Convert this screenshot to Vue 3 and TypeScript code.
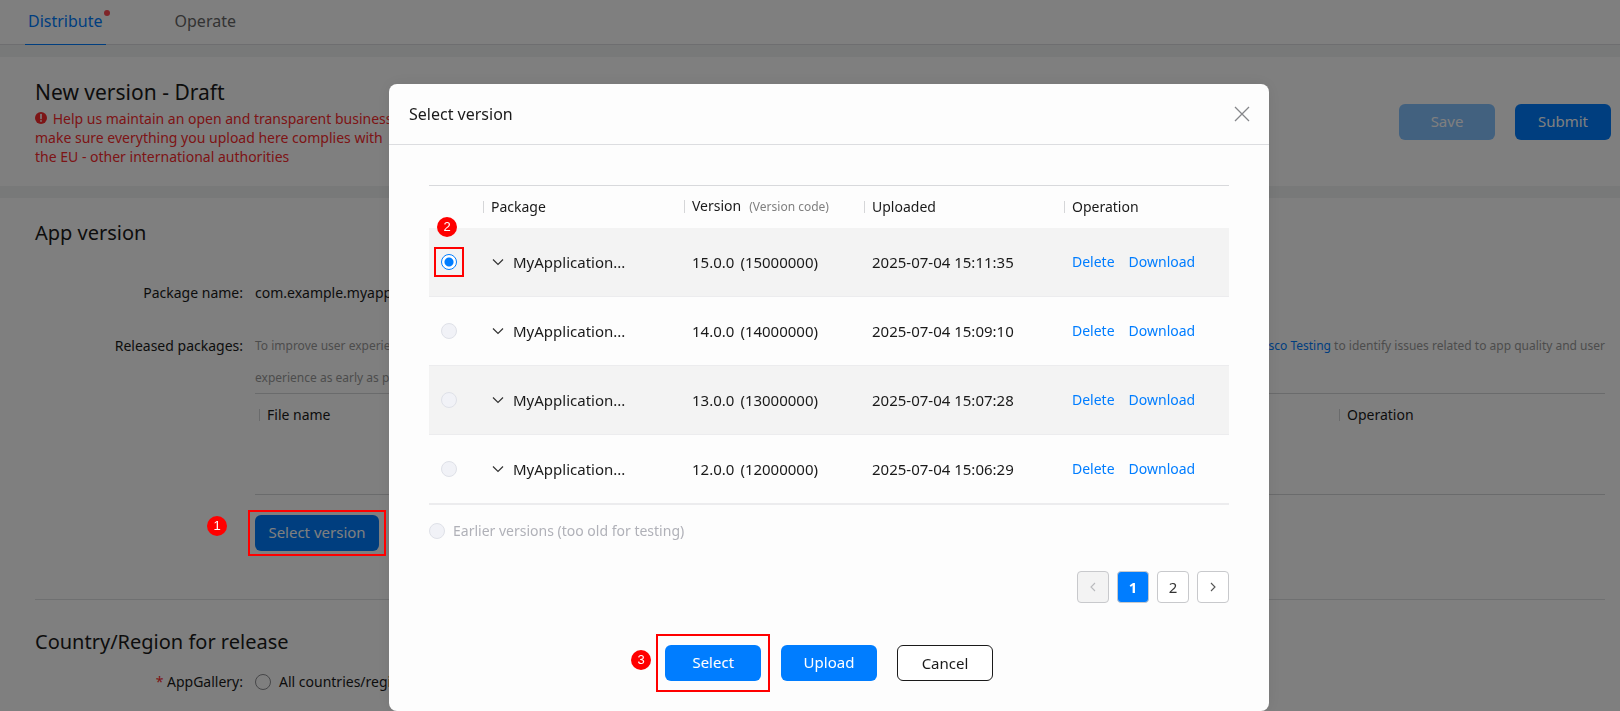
<script setup lang="ts">
import { ref } from 'vue'

interface PackageRow {
  version: string
  code: string
  uploaded: string
}

const rows: PackageRow[] = [
  { version: '15.0.0', code: '(15000000)', uploaded: '2025-07-04 15:11:35' },
  { version: '14.0.0', code: '(14000000)', uploaded: '2025-07-04 15:09:10' },
  { version: '13.0.0', code: '(13000000)', uploaded: '2025-07-04 15:07:28' },
  { version: '12.0.0', code: '(12000000)', uploaded: '2025-07-04 15:06:29' },
]

const selected = ref('15.0.0')
const page = ref(1)
</script>

<template>
  <div class="page">
    <nav class="tabs">
      <a href="#" class="tab active">Distribute<i class="dot"></i></a>
      <a href="#" class="tab">Operate</a>
    </nav>

    <header class="panel intro">
      <div class="intro-text">
        <h1>New version - Draft</h1>
        <p class="notice">
          <svg class="warn" viewBox="0 0 12 12" width="12" height="12" aria-hidden="true">
            <circle cx="6" cy="6" r="6" fill="#fa2a2d" />
            <path d="M6 2.6v4" stroke="#fff" stroke-width="1.6" stroke-linecap="round" />
            <circle cx="6" cy="8.9" r="0.9" fill="#fff" />
          </svg>
          Help us maintain an open and transparent business,<br />
          make sure everything you upload here complies with<br />
          the EU - other international authorities
        </p>
      </div>
      <div class="intro-actions">
        <button type="button" class="btn primary" disabled>Save</button>
        <button type="button" class="btn primary">Submit</button>
      </div>
    </header>

    <main class="panel content">
      <section class="block">
        <h2>App version</h2>
        <div class="field">
          <span class="label">Package name:</span>
          <span class="value">com.example.myapplication</span>
        </div>
        <div class="field">
          <span class="label">Released packages:</span>
          <div class="value">
            <div class="hint">
              <span>To improve user experience,</span>
              <span><a href="#">Disco Testing</a> to identify issues related to app quality and user</span>
            </div>
            <div class="hint">experience as early as possible.</div>
            <table class="files">
              <thead>
                <tr>
                  <th><span>File name</span></th>
                  <th class="op"><span>Operation</span></th>
                </tr>
              </thead>
              <tbody>
                <tr><td colspan="2"></td></tr>
              </tbody>
            </table>
            <div class="anchor">
              <button type="button" class="btn primary wide">Select version</button>
              <span class="frame frame-one"></span>
              <span class="step step-one">1</span>
            </div>
          </div>
        </div>
      </section>

      <section class="block">
        <h2>Country/Region for release</h2>
        <div class="field region">
          <span class="label"><b>*</b> AppGallery:</span>
          <label class="choice"><input type="radio" class="radio" name="region" />All countries/regions</label>
        </div>
      </section>
    </main>

    <div class="scrim">
      <div class="modal" role="dialog" aria-labelledby="dialog-title">
        <div class="modal-head">
          <h3 id="dialog-title">Select version</h3>
          <button type="button" class="icon-btn" aria-label="Close">
            <svg viewBox="0 0 16 16" width="16" height="16" fill="none" stroke="#85868a" stroke-width="1.3">
              <path d="M1 1l14 14M15 1L1 15" />
            </svg>
          </button>
        </div>

        <div class="modal-body">
          <table class="packages">
            <colgroup>
              <col class="c-pick" />
              <col class="c-package" />
              <col class="c-version" />
              <col class="c-uploaded" />
              <col />
            </colgroup>
            <thead>
              <tr>
                <th></th>
                <th><span>Package</span></th>
                <th><span>Version <small>(Version code)</small></span></th>
                <th><span>Uploaded</span></th>
                <th><span>Operation</span></th>
              </tr>
            </thead>
            <tbody>
              <tr v-for="(row, index) in rows" :key="row.version">
                <td class="pick">
                  <div class="anchor">
                    <input
                      v-model="selected"
                      type="radio"
                      class="radio"
                      name="package"
                      :value="row.version"
                      :disabled="index > 0"
                      :aria-label="row.version"
                    />
                    <template v-if="index === 0">
                      <span class="frame frame-two"></span>
                      <span class="step step-two">2</span>
                    </template>
                  </div>
                </td>
                <td>
                  <div class="package">
                    <button type="button" class="icon-btn" aria-label="Expand">
                      <svg viewBox="0 0 12 8" width="12" height="8" fill="none" stroke="#333" stroke-width="1.2">
                        <path d="M1 1.5l5 5 5-5" />
                      </svg>
                    </button>
                    <span>MyApplication...</span>
                  </div>
                </td>
                <td><div class="version"><span>{{ row.version }}</span><span>{{ row.code }}</span></div></td>
                <td>{{ row.uploaded }}</td>
                <td><div class="links"><a href="#">Delete</a><a href="#">Download</a></div></td>
              </tr>
            </tbody>
          </table>

          <label class="choice earlier">
            <input type="radio" class="radio" name="earlier" disabled />Earlier versions (too old for testing)
          </label>

          <div class="pager">
            <button type="button" disabled aria-label="Previous page">
              <svg viewBox="0 0 8 12" width="8" height="12" fill="none" stroke="#b9babd" stroke-width="1.1">
                <path d="M6 2L2 6l4 4" />
              </svg>
            </button>
            <button
              v-for="n in 2"
              :key="n"
              type="button"
              :class="{ current: page === n }"
              @click="page = n"
            >{{ n }}</button>
            <button type="button" aria-label="Next page">
              <svg viewBox="0 0 8 12" width="8" height="12" fill="none" stroke="#555" stroke-width="1.1">
                <path d="M2 2l4 4-4 4" />
              </svg>
            </button>
          </div>
        </div>

        <div class="modal-foot">
          <div class="anchor">
            <button type="button" class="btn primary">Select</button>
            <span class="frame frame-three"></span>
            <span class="step step-three">3</span>
          </div>
          <button type="button" class="btn primary">Upload</button>
          <button type="button" class="btn outline">Cancel</button>
        </div>
      </div>
    </div>
  </div>
</template>

<style>
body {
  margin: 0;
}
</style>

<style scoped>
.page {
  box-sizing: border-box;
  min-height: 100vh;
  display: flex;
  flex-direction: column;
  gap: 12px;
  background: #f1f2f3;
  color: #1a1a1a;
  font: 14px/20px "Noto Sans", "Open Sans", sans-serif;
}
.page * {
  box-sizing: border-box;
}
h1,
h2,
h3,
p {
  margin: 0;
  font-weight: 400;
}
h1,
h2 {
  font-size: 20px;
  line-height: 28px;
}
h1 {
  font-size: 21px;
}
a {
  color: #007dff;
  text-decoration: none;
}
button {
  font: inherit;
  padding: 0;
  cursor: pointer;
}
table {
  width: 100%;
  border-collapse: collapse;
  table-layout: fixed;
}
th {
  font-weight: 400;
  text-align: left;
  padding: 0;
}
td {
  padding: 0;
}

.tabs {
  display: flex;
  height: 45px;
  padding-left: 25px;
  gap: 66px;
  background: #fff;
  border-bottom: 1px solid #dcdde0;
  font-size: 16px;
}
.tab {
  position: relative;
  height: 45px;
  padding: 0 3px;
  line-height: 42px;
  color: #666;
}
.tab.active {
  color: #007dff;
  border-bottom: 1px solid #007dff;
}
.dot {
  position: absolute;
  top: 10px;
  right: -4px;
  width: 6px;
  height: 6px;
  border-radius: 50%;
  background: #ff4a50;
}

.panel {
  background: #fff;
}
.intro {
  display: flex;
  justify-content: space-between;
  padding: 21px 9px 20px 35px;
}
.notice {
  margin-top: 3px;
  line-height: 19px;
  color: #fa2a2d;
}
.warn {
  margin-right: 2px;
  vertical-align: 0;
}
.intro-actions {
  display: flex;
  gap: 20px;
  padding-top: 26px;
}
.btn {
  min-width: 96px;
  height: 36px;
  border: 0;
  border-radius: 6px;
  font-size: 15px;
  line-height: 34px;
}
.btn.primary {
  background: #007dff;
  color: #fff;
}
.btn.primary:disabled {
  background: #84c2ff;
}
.btn.wide {
  min-width: 124px;
}
.btn.outline {
  background: #fff;
  border: 1px solid #1a1a1a;
  color: #1a1a1a;
}
.btn.primary,
.btn.outline {
  padding-bottom: 2px;
}

.content {
  flex: 1;
  padding: 0 15px 0 35px;
}
.block {
  padding-top: 21px;
}
.block + .block {
  margin-top: 48px;
  padding-top: 28px;
  border-top: 1px solid #dfe0e2;
}
.field {
  display: flex;
  gap: 12px;
  margin-top: 21px;
  line-height: 32px;
}
h2 + .field {
  margin-top: 30px;
}
h2 + .region {
  margin-top: 10px;
}
.label {
  width: 208px;
  text-align: right;
}
.label b {
  color: #fa2a2d;
  font-weight: 400;
}
.value {
  flex: 1;
}
.hint {
  display: flex;
  justify-content: space-between;
  font-size: 12px;
  color: #999;
}
.hint + .files {
  margin-top: -1px;
}
.files {
  border-top: 1px solid #d5d6d8;
  border-bottom: 1px solid #d5d6d8;
  margin-bottom: 20px;
}
.files th {
  height: 43px;
  padding-left: 4px;
}
.files td {
  height: 58px;
}
.files .op {
  width: 266px;
  padding: 0;
}
th span {
  display: flex;
  align-items: baseline;
  gap: 8px;
  line-height: 12px;
  padding-left: 7px;
  border-left: 1px solid #d5d6d8;
}

.choice {
  display: flex;
  align-items: center;
  gap: 8px;
}
.radio {
  display: block;
  appearance: none;
  width: 16px;
  height: 16px;
  margin: 0;
  border: 1px solid #8c8d91;
  border-radius: 50%;
  background: #fff;
}
.radio:checked {
  border-color: #007dff;
  background: radial-gradient(circle, #007dff 0 4px, #fff 5px);
}
.radio:disabled {
  border-color: #dfe1e8;
  background: #f1f2f7;
}

.scrim {
  position: fixed;
  inset: 0;
  z-index: 10;
  display: flex;
  justify-content: center;
  align-items: flex-start;
  padding: 84px 0 0 38px;
  overflow: hidden;
  background: rgba(0, 0, 0, 0.5);
}
.modal {
  width: 880px;
  border-radius: 8px;
  background: #fdfdfd;
  box-shadow: 0 0 16px rgba(0, 0, 0, 0.08);
}
.modal-head {
  display: flex;
  justify-content: space-between;
  align-items: center;
  height: 61px;
  padding: 0 19px 0 20px;
  border-bottom: 1px solid #dcdde0;
}
.modal-head h3 {
  font-size: 16px;
  line-height: 24px;
}
.icon-btn {
  display: flex;
  border: 0;
  background: none;
}
.modal-body {
  padding: 40px 40px 0;
}
.packages {
  border-top: 1px solid #d8d9dc;
  border-bottom: 2px solid #ececee;
}
.c-pick {
  width: 54px;
}
.c-package {
  width: 201px;
}
.c-version {
  width: 180px;
}
.c-uploaded {
  width: 200px;
}
.packages th {
  height: 42px;
}
small {
  font-size: 12px;
  color: #808080;
}
.packages td {
  height: 69px;
  padding-left: 8px;
  border-bottom: 1px solid #ececee;
  font-size: 15px;
}
.packages .pick {
  padding-left: 12px;
}
.packages tbody tr:nth-child(odd) {
  background: #f3f3f3;
}
.package {
  display: flex;
  align-items: center;
  gap: 9px;
}
.package .icon-btn {
  margin-left: 1px;
}
.version {
  display: flex;
  gap: 6px;
}
.links {
  display: flex;
  gap: 14px;
  font-size: 14px;
}
.earlier {
  width: fit-content;
  margin-top: 16px;
  color: #b0b1b8;
}
.pager {
  display: flex;
  justify-content: flex-end;
  gap: 8px;
  margin-top: 30px;
}
.pager button {
  display: flex;
  align-items: center;
  justify-content: center;
  width: 32px;
  height: 32px;
  border: 1px solid #c8c9cc;
  border-radius: 4px;
  background: #fff;
  color: #333;
  font-size: 15px;
}
.pager button:disabled {
  background: #f3f3f3;
}
.pager .current {
  background: #007dff;
  color: #fff;
  font-weight: 700;
}
.modal-foot {
  display: flex;
  justify-content: center;
  gap: 20px;
  padding: 42px 0 30px;
}

.anchor {
  position: relative;
  width: fit-content;
}
.frame,
.step {
  position: absolute;
  z-index: 20;
}
.frame {
  border: 2px solid #f00;
  pointer-events: none;
}
.frame-one {
  inset: -5px -7px;
}
.frame-two {
  inset: -7px;
}
.frame-three {
  inset: -11px -9px;
}
.step {
  width: 20px;
  height: 20px;
  border-radius: 50%;
  background: #f00;
  color: #fff;
  font: 13px/20px "Liberation Sans", Arial, sans-serif;
  text-align: center;
}
.step-one {
  top: 1px;
  left: -48px;
}
.step-two {
  top: -37px;
  left: -4px;
}
.step-three {
  top: 5px;
  left: -34px;
}
</style>
